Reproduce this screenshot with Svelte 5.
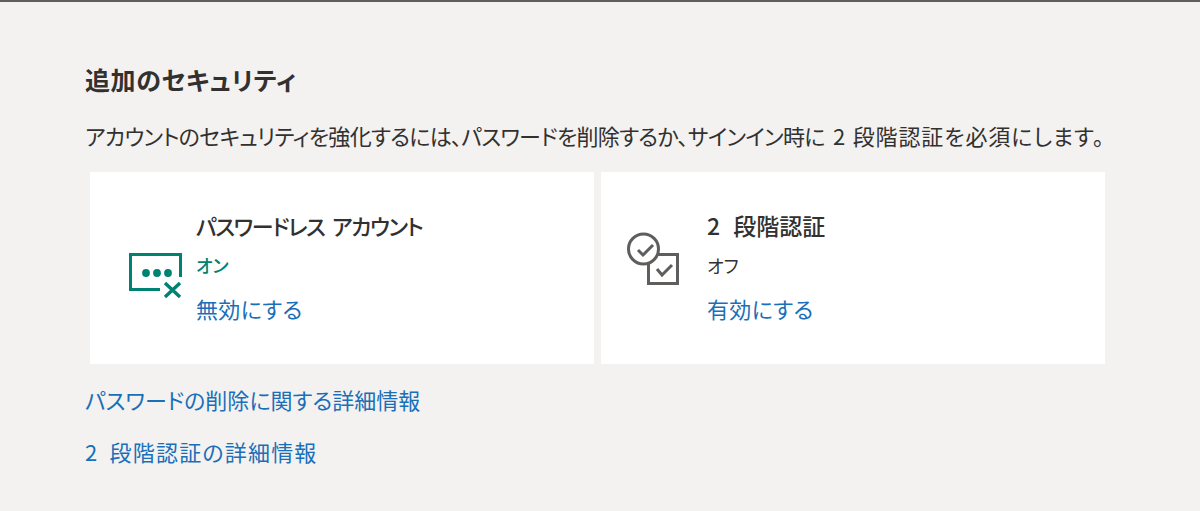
<script>
  const cards = [
    { title: 'パスワードレス アカウント', status: 'オン', on: true, action: '無効にする' },
    { title: '2 段階認証', status: 'オフ', on: false, action: '有効にする' }
  ];
</script>

<main>
  <h2>追加のセキュリティ</h2>
  <p class="lead">アカウントのセキュリティを強化するには、パスワードを削除するか、サインイン時に 2 <span>段階認証を必須にします。</span></p>

  <div class="cards">
    {#each cards as card}
      <section class="card">
        <svg class="icon" width="70" height="84" viewBox="0 0 70 84" fill="none">
          {#if card.on}
            <path d="M44 63.6H14.5V28.5H64.5V51" stroke="#008272" stroke-width="3" />
            <circle cx="30" cy="47" r="3.9" fill="#008272" />
            <circle cx="41" cy="47" r="3.9" fill="#008272" />
            <circle cx="52" cy="47" r="3.9" fill="#008272" />
            <path d="M49 57L64 71M64 57L49 71" stroke="#008272" stroke-width="3.4" />
          {:else}
            <path d="M21.5 28.5H50.5V57.5H21.5Z" fill="#fff" stroke="#605e5c" stroke-width="3" />
            <circle cx="16.5" cy="23" r="15" fill="#fff" stroke="#605e5c" stroke-width="3" />
            <path d="M11 24L16 29L26 19" stroke="#605e5c" stroke-width="3" />
            <path d="M30 43L35 49L45 39" stroke="#605e5c" stroke-width="3" />
          {/if}
        </svg>
        <div class="body">
          <h3 class:on={card.on}>{card.title}</h3>
          <div class="status" class:on={card.on}>{card.status}</div>
          <a href="#top" class="action">{card.action}</a>
        </div>
      </section>
    {/each}
  </div>

  <div class="links">
    <a href="#top">パスワードの削除に関する詳細情報</a>
    <a href="#top" class="wide">2 段階認証の詳細情報</a>
  </div>
</main>

<style>
  :global(body) {
    background: #f3f2f1;
  }

  main {
    height: 511px;
    box-sizing: border-box;
    border-top: 2px solid #605e5c;
    padding: 58px 95px 0 85px;
    color: #323130;
    font-family: "Noto Sans CJK JP", "Noto Sans", sans-serif;
    font-feature-settings: "palt";
    overflow: hidden;
  }

  h2 {
    margin: 0;
    font-size: 25px;
    line-height: 38px;
    font-weight: 700;
    letter-spacing: 0.6px;
  }

  .lead {
    margin: 21px 0 0;
    font-size: 22px;
    line-height: 32px;
    white-space: nowrap;
    letter-spacing: -0.7px;
    word-spacing: 4px;
  }

  .lead span {
    letter-spacing: 0.9px;
  }

  .cards {
    display: flex;
    gap: 7px;
    margin: 21px 0 0 5px;
  }

  .card {
    width: 504px;
    height: 192px;
    background: #fff;
    display: flex;
    align-items: center;
    gap: 10px;
    padding-left: 26px;
    box-sizing: border-box;
  }

  .body {
    margin-top: -4px;
  }

  h3 {
    margin: 0;
    font-size: 23px;
    line-height: 32px;
    font-weight: 500;
    word-spacing: 8px;
  }

  h3.on {
    font-size: 22px;
    letter-spacing: -1.4px;
    word-spacing: 4px;
  }

  .status {
    margin-top: 12px;
    font-size: 18px;
    line-height: 24px;
    color: #323130;
  }

  .status.on {
    color: #008272;
    font-weight: 500;
  }

  a {
    color: #1a6fb8;
    text-decoration: none;
  }

  .action {
    display: block;
    margin-top: 15px;
    font-size: 22px;
    line-height: 32px;
    letter-spacing: 0.3px;
  }

  .links {
    display: flex;
    flex-direction: column;
    gap: 20px;
    margin-top: 19px;
    font-size: 22px;
    line-height: 32px;
  }

  .wide {
    word-spacing: 5px;
    letter-spacing: 1.2px;
  }
</style>
